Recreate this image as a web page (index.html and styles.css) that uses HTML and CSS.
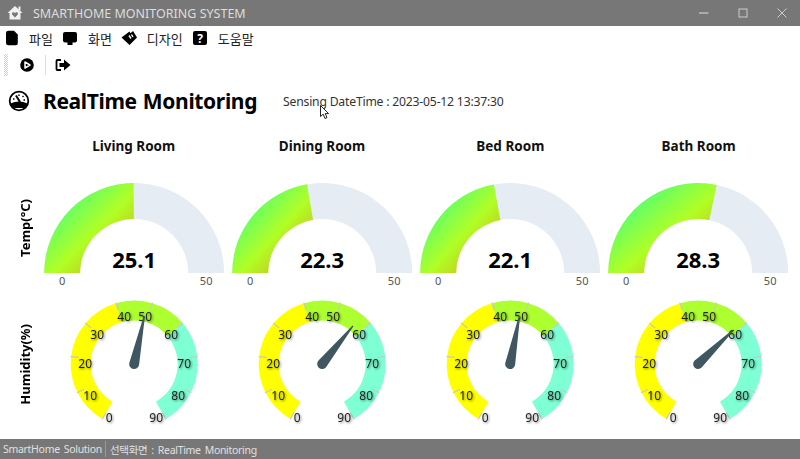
FILE: index.html
```html
<!DOCTYPE html>
<html lang="ko">
<head>
    <meta charset="UTF-8">
    <title>SmartHome Monitoring System</title>
    <link rel="stylesheet" href="styles.css">
</head>
<body>
    <div class="titlebar">
        <svg class="app-icon" width="16" height="16" viewBox="0 0 16 16">
            <path d="M8 1 L15.5 8 L13.5 8 L13.5 14.5 L2.5 14.5 L2.5 8 L.5 8 Z" fill="#f0f0f0"/>
            <path d="M8 12.5 L5.2 9.6 Q4.4 7.8 6 7.3 Q7.3 7 8 8.2 Q8.7 7 10 7.3 Q11.6 7.8 10.8 9.6 Z" fill="#777"/>
            <rect x="11.5" y="1.5" width="2" height="4" fill="#f0f0f0"/>
        </svg>
        <span class="app-title">SMARTHOME MONITORING SYSTEM</span>
        <div class="window-buttons">
            <svg width="10" height="10" viewBox="0 0 10 10"><path d="M0 5H9.5" stroke="#ddd" stroke-width="1"/></svg>
            <svg width="10" height="10" viewBox="0 0 10 10"><rect x="1" y="1" width="8" height="8" fill="none" stroke="#ccc" stroke-width="1"/></svg>
            <svg width="10" height="10" viewBox="0 0 10 10"><path d="M.5 .5L9.5 9.5M9.5 .5L.5 9.5" stroke="#ccc" stroke-width="1"/></svg>
        </div>
    </div>

    <div class="menubar">
        <div class="menu-item">
            <svg width="14" height="16" viewBox="0 0 14 16"><path d="M3.5 .8H9L12.8 4.5V13Q12.8 15.2 10.8 15.2H3.5Q1 15.2 1 13V3Q1 .8 3.5 .8Z"/></svg>
            <span>파일</span>
        </div>
        <div class="menu-item">
            <svg width="16" height="16" viewBox="0 0 16 16"><rect x="1" y="2" width="14" height="10.5" rx="2"/><rect x="5.5" y="12" width="5" height="3"/></svg>
            <span>화면</span>
        </div>
        <div class="menu-item">
            <svg width="16" height="16" viewBox="0 0 16 16">
                <path d="M.5 7.5L8.5 1.5L9.5 3.2L12 1L16 7.5L8.5 15Z"/>
                <path d="M8 5.5L10 8.5M10.5 4.5L12 7" stroke="#fff" stroke-width="1.4"/>
            </svg>
            <span>디자인</span>
        </div>
        <div class="menu-item">
            <svg width="16" height="16" viewBox="0 0 16 16">
                <rect x="1" y="1" width="14" height="14" rx="2"/>
                <text class="help-mark" x="8" y="12.5">?</text>
            </svg>
            <span>도움말</span>
        </div>
    </div>

    <div class="toolbar">
        <div class="grip"></div>
        <svg class="tool-play" width="16" height="16" viewBox="0 0 16 16">
            <circle cx="8" cy="8" r="6.8"/>
            <path d="M6 5L11 8L6 11Z" fill="none" stroke="#fff" stroke-width="1.5" stroke-linejoin="round"/>
        </svg>
        <div class="tool-sep"></div>
        <svg class="tool-exit" width="16" height="16" viewBox="0 0 16 16">
            <path d="M6 3H2.5Q1.5 3 1.5 4V12Q1.5 13 2.5 13H6" fill="none" stroke="#000" stroke-width="1.8"/>
            <path d="M4.5 6H9V2.5L15.5 8L9 13.5V10H4.5Z"/>
        </svg>
    </div>

    <div class="heading">
        <svg class="heading-icon" width="22" height="22" viewBox="0 0 22 22">
            <circle cx="11" cy="11" r="9.3" fill="#fff" stroke="#000" stroke-width="1.8"/>
            <path d="M2.5 13.5Q11 9.5 19.5 13.5Q19.5 16 16.5 18H5.5Q2.5 16 2.5 13.5Z"/>
            <path d="M12 12L8 5.5" stroke="#000" stroke-width="2"/>
            <path d="M5 9h1.5M11 4.5v1.5M15.5 6l-1 1M17 10h-1.5" stroke="#000" stroke-width="1.4"/>
        </svg>
        <h1>RealTime Monitoring</h1>
        <span class="sensing-time">Sensing DateTime : 2023-05-12 13:37:30</span>
    </div>

    <div class="board">
        <div></div>
        <h2>Living Room</h2>
        <h2>Dining Room</h2>
        <h2>Bed Room</h2>
        <h2>Bath Room</h2>

        <div class="row-label row-label-temp"><span>Temp(°C)</span></div>
        <svg class="half-gauge" viewBox="-94 -98 188 120">
            <defs>
                <linearGradient id="tempFill" x1="0" y1="0" x2="1" y2="1">
                    <stop offset="0" stop-color="#20ffa0"/>
                    <stop offset="0.55" stop-color="#b0ff25"/>
                    <stop offset="0.82" stop-color="#c4c41c"/>
                    <stop offset="1" stop-color="#c03000"/>
                </linearGradient>
                <g id="dialBand">
                    <path fill="#ffff00" d="M-31.75 55A63.5 63.5 0 0 1 -18.21 -60.83L-12.48 -41.67A43.5 43.5 0 0 0 -21.75 37.67Z"/>
                    <path fill="#adff2f" d="M-18.21 -60.83A63.5 63.5 0 0 1 48.64 -40.82L33.32 -27.96A43.5 43.5 0 0 0 -12.48 -41.67Z"/>
                    <path fill="#7fffd4" d="M48.64 -40.82A63.5 63.5 0 0 1 31.75 55L21.75 37.67A43.5 43.5 0 0 0 33.32 -27.96Z"/>
                    <g stroke="#c8c8c8" stroke-width="1.2">
                        <line y1="-64" y2="-56" transform="rotate(-150)"/>
                        <line y1="-64" y2="-56" transform="rotate(-116.7)"/>
                        <line y1="-64" y2="-56" transform="rotate(-83.3)"/>
                        <line y1="-64" y2="-56" transform="rotate(-50)"/>
                        <line y1="-64" y2="-56" transform="rotate(-16.7)"/>
                        <line y1="-64" y2="-56" transform="rotate(16.7)"/>
                        <line y1="-64" y2="-56" transform="rotate(50)"/>
                        <line y1="-64" y2="-56" transform="rotate(83.3)"/>
                        <line y1="-64" y2="-56" transform="rotate(116.7)"/>
                        <line y1="-64" y2="-56" transform="rotate(150)"/>
                    </g>
                </g>
                <path id="needle" fill="#405660" d="M-5 0L-.6 -49H.6L5 0A5 5 0 0 1 -5 0Z"/>
                <path id="tempTrack" fill="#e6ecf4" d="M-90 0A90 90 0 0 1 90 0H54A54 54 0 0 0 -54 0Z"/>
            </defs>
            <use href="#tempTrack"/>
            <path fill="url(#tempFill)" d="M-90 0A90 90 0 0 1 -.5 -90L-.3 -54A54 54 0 0 0 -54 0Z"/>
            <text class="temp-value" y="-5">25.1</text>
            <text class="temp-scale" x="-72" y="12">0</text>
            <text class="temp-scale" x="72" y="12">50</text>
        </svg>
        <svg class="half-gauge" viewBox="-94 -98 188 120">
            <use href="#tempTrack"/>
            <path fill="url(#tempFill)" d="M-90 0A90 90 0 0 1 -15.19 -88.7L-9.12 -53.22A54 54 0 0 0 -54 0Z"/>
            <text class="temp-value" y="-5">22.3</text>
            <text class="temp-scale" x="-72" y="12">0</text>
            <text class="temp-scale" x="72" y="12">50</text>
        </svg>
        <svg class="half-gauge" viewBox="-94 -98 188 120">
            <use href="#tempTrack"/>
            <path fill="url(#tempFill)" d="M-90 0A90 90 0 0 1 -16.31 -88.51L-9.78 -53.11A54 54 0 0 0 -54 0Z"/>
            <text class="temp-value" y="-5">22.1</text>
            <text class="temp-scale" x="-72" y="12">0</text>
            <text class="temp-scale" x="72" y="12">50</text>
        </svg>
        <svg class="half-gauge" viewBox="-94 -98 188 120">
            <use href="#tempTrack"/>
            <path fill="url(#tempFill)" d="M-90 0A90 90 0 0 1 18.53 -88.07L11.12 -52.84A54 54 0 0 0 -54 0Z"/>
            <text class="temp-value" y="-5">28.3</text>
            <text class="temp-scale" x="-72" y="12">0</text>
            <text class="temp-scale" x="72" y="12">50</text>
        </svg>

        <div class="row-label row-label-humidity"><span>Humidity(%)</span></div>
        <svg class="dial" viewBox="-94 -69 188 144">
            <use href="#dialBand"/>
            <g class="dial-scale">
                <text x="-25" y="58">0</text>
                <text x="-44" y="36">10</text>
                <text x="-49" y="4">20</text>
                <text x="-37" y="-25">30</text>
                <text x="-10" y="-43">40</text>
                <text x="11" y="-43">50</text>
                <text x="37" y="-25">60</text>
                <text x="50" y="4">70</text>
                <text x="44" y="36">80</text>
                <text x="22" y="58">90</text>
            </g>
            <use href="#needle" transform="rotate(12)"/>
        </svg>
        <svg class="dial" viewBox="-94 -69 188 144">
            <use href="#dialBand"/>
            <g class="dial-scale">
                <text x="-25" y="58">0</text>
                <text x="-44" y="36">10</text>
                <text x="-49" y="4">20</text>
                <text x="-37" y="-25">30</text>
                <text x="-10" y="-43">40</text>
                <text x="11" y="-43">50</text>
                <text x="37" y="-25">60</text>
                <text x="50" y="4">70</text>
                <text x="44" y="36">80</text>
                <text x="22" y="58">90</text>
            </g>
            <use href="#needle" transform="rotate(39)"/>
        </svg>
        <svg class="dial" viewBox="-94 -69 188 144">
            <use href="#dialBand"/>
            <g class="dial-scale">
                <text x="-25" y="58">0</text>
                <text x="-44" y="36">10</text>
                <text x="-49" y="4">20</text>
                <text x="-37" y="-25">30</text>
                <text x="-10" y="-43">40</text>
                <text x="11" y="-43">50</text>
                <text x="37" y="-25">60</text>
                <text x="50" y="4">70</text>
                <text x="44" y="36">80</text>
                <text x="22" y="58">90</text>
            </g>
            <use href="#needle" transform="rotate(11)"/>
        </svg>
        <svg class="dial" viewBox="-94 -69 188 144">
            <use href="#dialBand"/>
            <g class="dial-scale">
                <text x="-25" y="58">0</text>
                <text x="-44" y="36">10</text>
                <text x="-49" y="4">20</text>
                <text x="-37" y="-25">30</text>
                <text x="-10" y="-43">40</text>
                <text x="11" y="-43">50</text>
                <text x="37" y="-25">60</text>
                <text x="50" y="4">70</text>
                <text x="44" y="36">80</text>
                <text x="22" y="58">90</text>
            </g>
            <use href="#needle" transform="rotate(46)"/>
        </svg>
    </div>

    <div class="statusbar">
        <span>SmartHome Solution</span>
        <div class="status-sep"></div>
        <span>선택화면 : RealTime Monitoring</span>
    </div>

    <svg class="cursor" width="12" height="16" viewBox="0 0 12 16">
        <path d="M.5 .5V11.5L3.2 9.2L5 13.5L7 12.6L5.2 8.6H8.6Z" fill="#fff" stroke="#222" stroke-width="1"/>
    </svg>
</body>
</html>
```

FILE: styles.css
```css
* {
    box-sizing: border-box;
}
html, body {
    height: 100%;
}
body {
    margin: 0;
    display: flex;
    flex-direction: column;
    height: 459px;
    overflow: hidden;
    position: relative;
    background-color: #fff;
    font-family: "Noto Sans", "Noto Sans CJK KR", sans-serif;
    color: #000;
}

/* window chrome */
.titlebar {
    height: 26px;
    flex: none;
    display: flex;
    align-items: center;
    padding-left: 7px;
    background-color: #777;
    color: #ddd;
}
.app-icon {
    flex: none;
}
.app-title {
    margin-left: 10px;
    font-size: 12.5px;
}
.window-buttons {
    margin-left: auto;
    margin-right: 13px;
    display: flex;
    gap: 29px;
}
.window-buttons svg {
    display: block;
}

.menubar {
    height: 24px;
    flex: none;
    display: flex;
    align-items: center;
    gap: 9px;
    padding-left: 5px;
}
.menu-item {
    display: flex;
    align-items: center;
    gap: 10px;
    font-size: 13px;
    color: #222;
}
.menu-item svg {
    flex: none;
}
.help-mark {
    fill: #fff;
    font-size: 12px;
    font-weight: 700;
    text-anchor: middle;
}

.toolbar {
    height: 29px;
    flex: none;
    display: flex;
    align-items: center;
    padding-left: 4px;
}
.grip {
    width: 4px;
    height: 22px;
    background-image: repeating-conic-gradient(#d0d0d0 0 25%, transparent 0 50%);
    background-size: 2px 2px;
}
.tool-play {
    margin-left: 11px;
}
.tool-sep {
    width: 1px;
    height: 20px;
    margin-left: 10px;
    background-color: #ddd;
}
.tool-exit {
    margin-left: 9px;
}

.heading {
    height: 56px;
    flex: none;
    display: flex;
    align-items: center;
    padding: 0 0 12px 8px;
}
h1 {
    margin: 0 0 0 13px;
    width: 240px;
    font-size: 21px;
    font-weight: 700;
    letter-spacing: -0.35px;
    word-spacing: 1px;
}
.sensing-time {
    font-size: 12.2px;
    letter-spacing: -0.2px;
    color: #333;
}

/* gauges */
.board {
    flex: 1;
    display: grid;
    grid-template-columns: 39.5px repeat(4, 188.33px);
    grid-template-rows: 40px 120px 144px;
}
h2 {
    margin: 0;
    padding-top: 1px;
    text-align: center;
    font-size: 13.5px;
    font-weight: 700;
    line-height: 20px;
    color: #111;
}
.row-label {
    display: flex;
    justify-content: center;
    padding-left: 10px;
    font-size: 13px;
    font-weight: 700;
}
.row-label-temp {
    padding-bottom: 14px;
}
.row-label-humidity {
    padding-bottom: 6px;
}
.row-label span {
    writing-mode: vertical-rl;
    transform: rotate(180deg);
    align-self: center;
}
.half-gauge, .dial {
    display: block;
    width: 188.33px;
}
.half-gauge {
    height: 120px;
}
.dial {
    height: 144px;
}
.temp-value {
    font-size: 22px;
    font-weight: 700;
    text-anchor: middle;
    fill: #000;
}
.temp-scale {
    font-size: 11px;
    text-anchor: middle;
    fill: #555;
}
.dial-scale {
    font-size: 12px;
    text-anchor: middle;
    fill: #222;
    filter: drop-shadow(1px 1px 1px rgba(0, 0, 0, 0.5));
}

.statusbar {
    height: 20px;
    flex: none;
    display: flex;
    align-items: center;
    padding-left: 3px;
    background-color: #777;
    color: #e0e0e0;
    font-size: 10.5px;
    letter-spacing: -0.3px;
    word-spacing: 1.5px;
}
.status-sep {
    width: 1px;
    height: 16px;
    margin: 0 4px 0 3px;
    background-color: #999;
}

.cursor {
    position: absolute;
    left: 320px;
    top: 105px;
}
```
